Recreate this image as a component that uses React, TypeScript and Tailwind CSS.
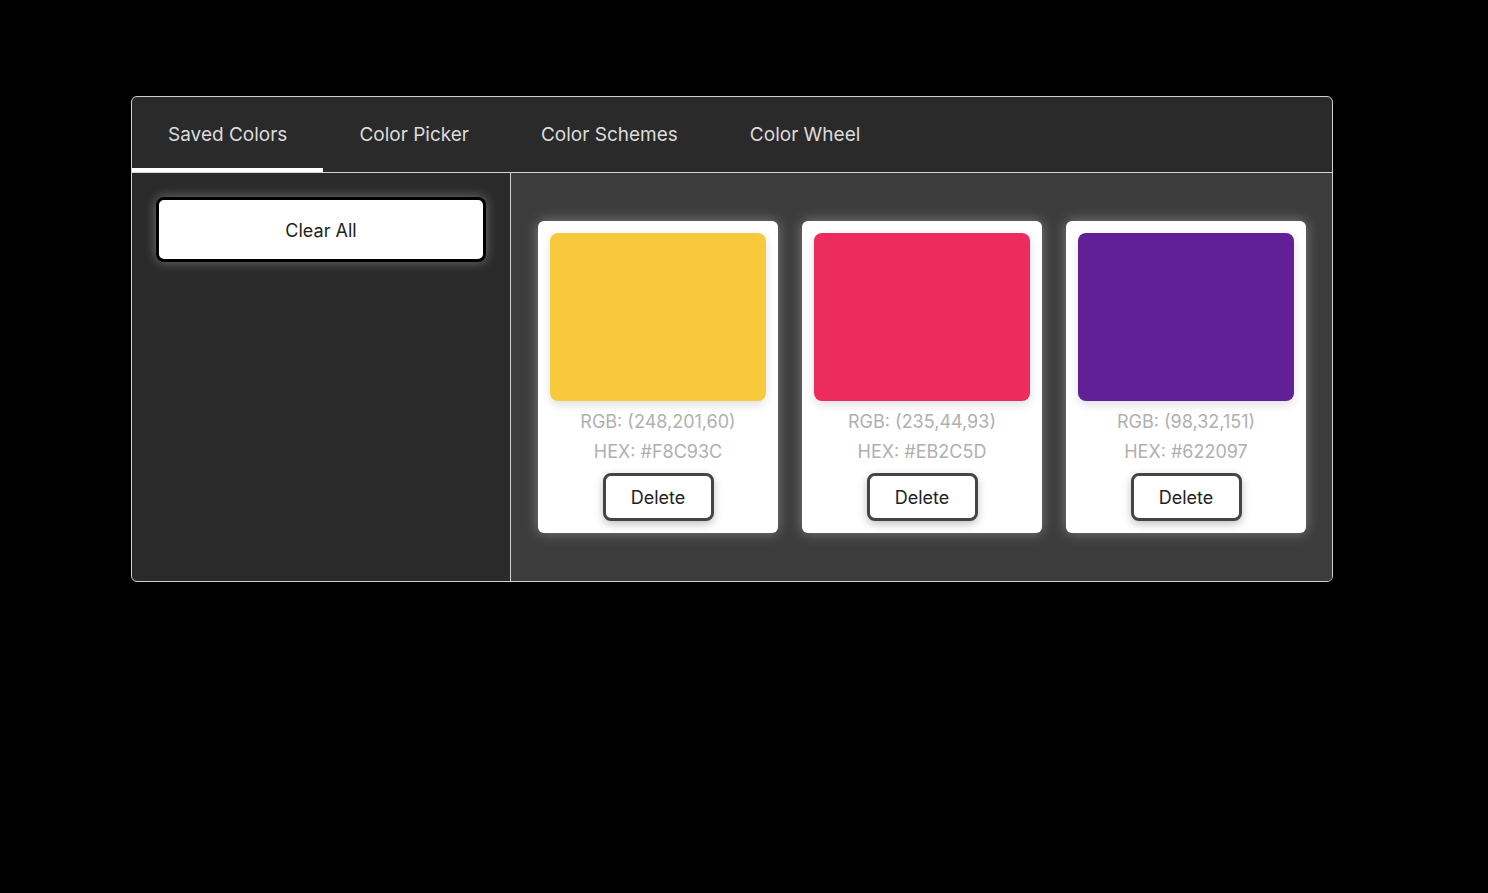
import { useState } from "react";

const tabs = ["Saved Colors", "Color Picker", "Color Schemes", "Color Wheel"];

const saved = [
  { rgb: [248, 201, 60], hex: "#F8C93C" },
  { rgb: [235, 44, 93], hex: "#EB2C5D" },
  { rgb: [98, 32, 151], hex: "#622097" },
];

export default function App() {
  const [active, setActive] = useState(0);
  const [colors, setColors] = useState(saved);

  return (
    <div className="min-h-[893px] bg-black pt-[96px] pl-[131px] font-['Inter',sans-serif]">
      <div className="w-[1202px] rounded-[6px] border border-[#cfcfcf] bg-[#2a2a2a] overflow-hidden">
        {/* Tabs */}
        <div className="flex h-[76px] border-b border-[#d4d4d4]">
          {tabs.map((t, i) => (
            <button
              key={t}
              onClick={() => setActive(i)}
              className={
                "relative h-full px-[36px] pt-[1px] text-[19px] text-[#dcdcdc] " +
                (i === active ? "after:absolute after:left-0 after:right-0 after:bottom-0 after:h-[4px] after:bg-white" : "")
              }
            >
              {t}
            </button>
          ))}
        </div>

        <div className="flex h-[408px]">
          {/* Left */}
          <div className="w-[379px] shrink-0 border-r border-[#cfcfcf] p-[24px]">
            <button
              onClick={() => setColors([])}
              className="h-[65px] w-full rounded-[8px] border-[3px] border-black bg-white pt-[2px] text-[18px] text-[#222] shadow-[0_0_12px_rgba(255,255,255,0.35)]"
            >
              Clear All
            </button>
          </div>

          {/* Right */}
          <div className="flex flex-1 items-start gap-[24px] bg-[#3c3c3c] px-[27px] pt-[48px]">
            {colors.map((c, i) => (
              <div
                key={c.hex}
                className="flex w-[240px] flex-col items-center rounded-[6px] bg-white p-[12px] shadow-[0_0_14px_rgba(255,255,255,0.35)]"
              >
                <div
                  className="h-[168px] w-full rounded-[8px] shadow-[0_4px_10px_rgba(0,0,0,0.12)]"
                  style={{ backgroundColor: c.hex }}
                />
                <div className="mt-[6px] text-[18px] leading-[30px] text-[#b0b0b0]">
                  RGB: ({c.rgb.join(",")})
                </div>
                <div className="text-[18px] leading-[30px] text-[#b0b0b0]">HEX: {c.hex}</div>
                <button
                  onClick={() => setColors(colors.filter((_, j) => j !== i))}
                  className="mt-[6px] h-[48px] w-[111px] rounded-[8px] border-[3px] border-[#444] bg-white text-[18px] text-[#222] shadow-[0_3px_8px_rgba(0,0,0,0.25)]"
                >
                  Delete
                </button>
              </div>
            ))}
          </div>
        </div>
      </div>
    </div>
  );
}
